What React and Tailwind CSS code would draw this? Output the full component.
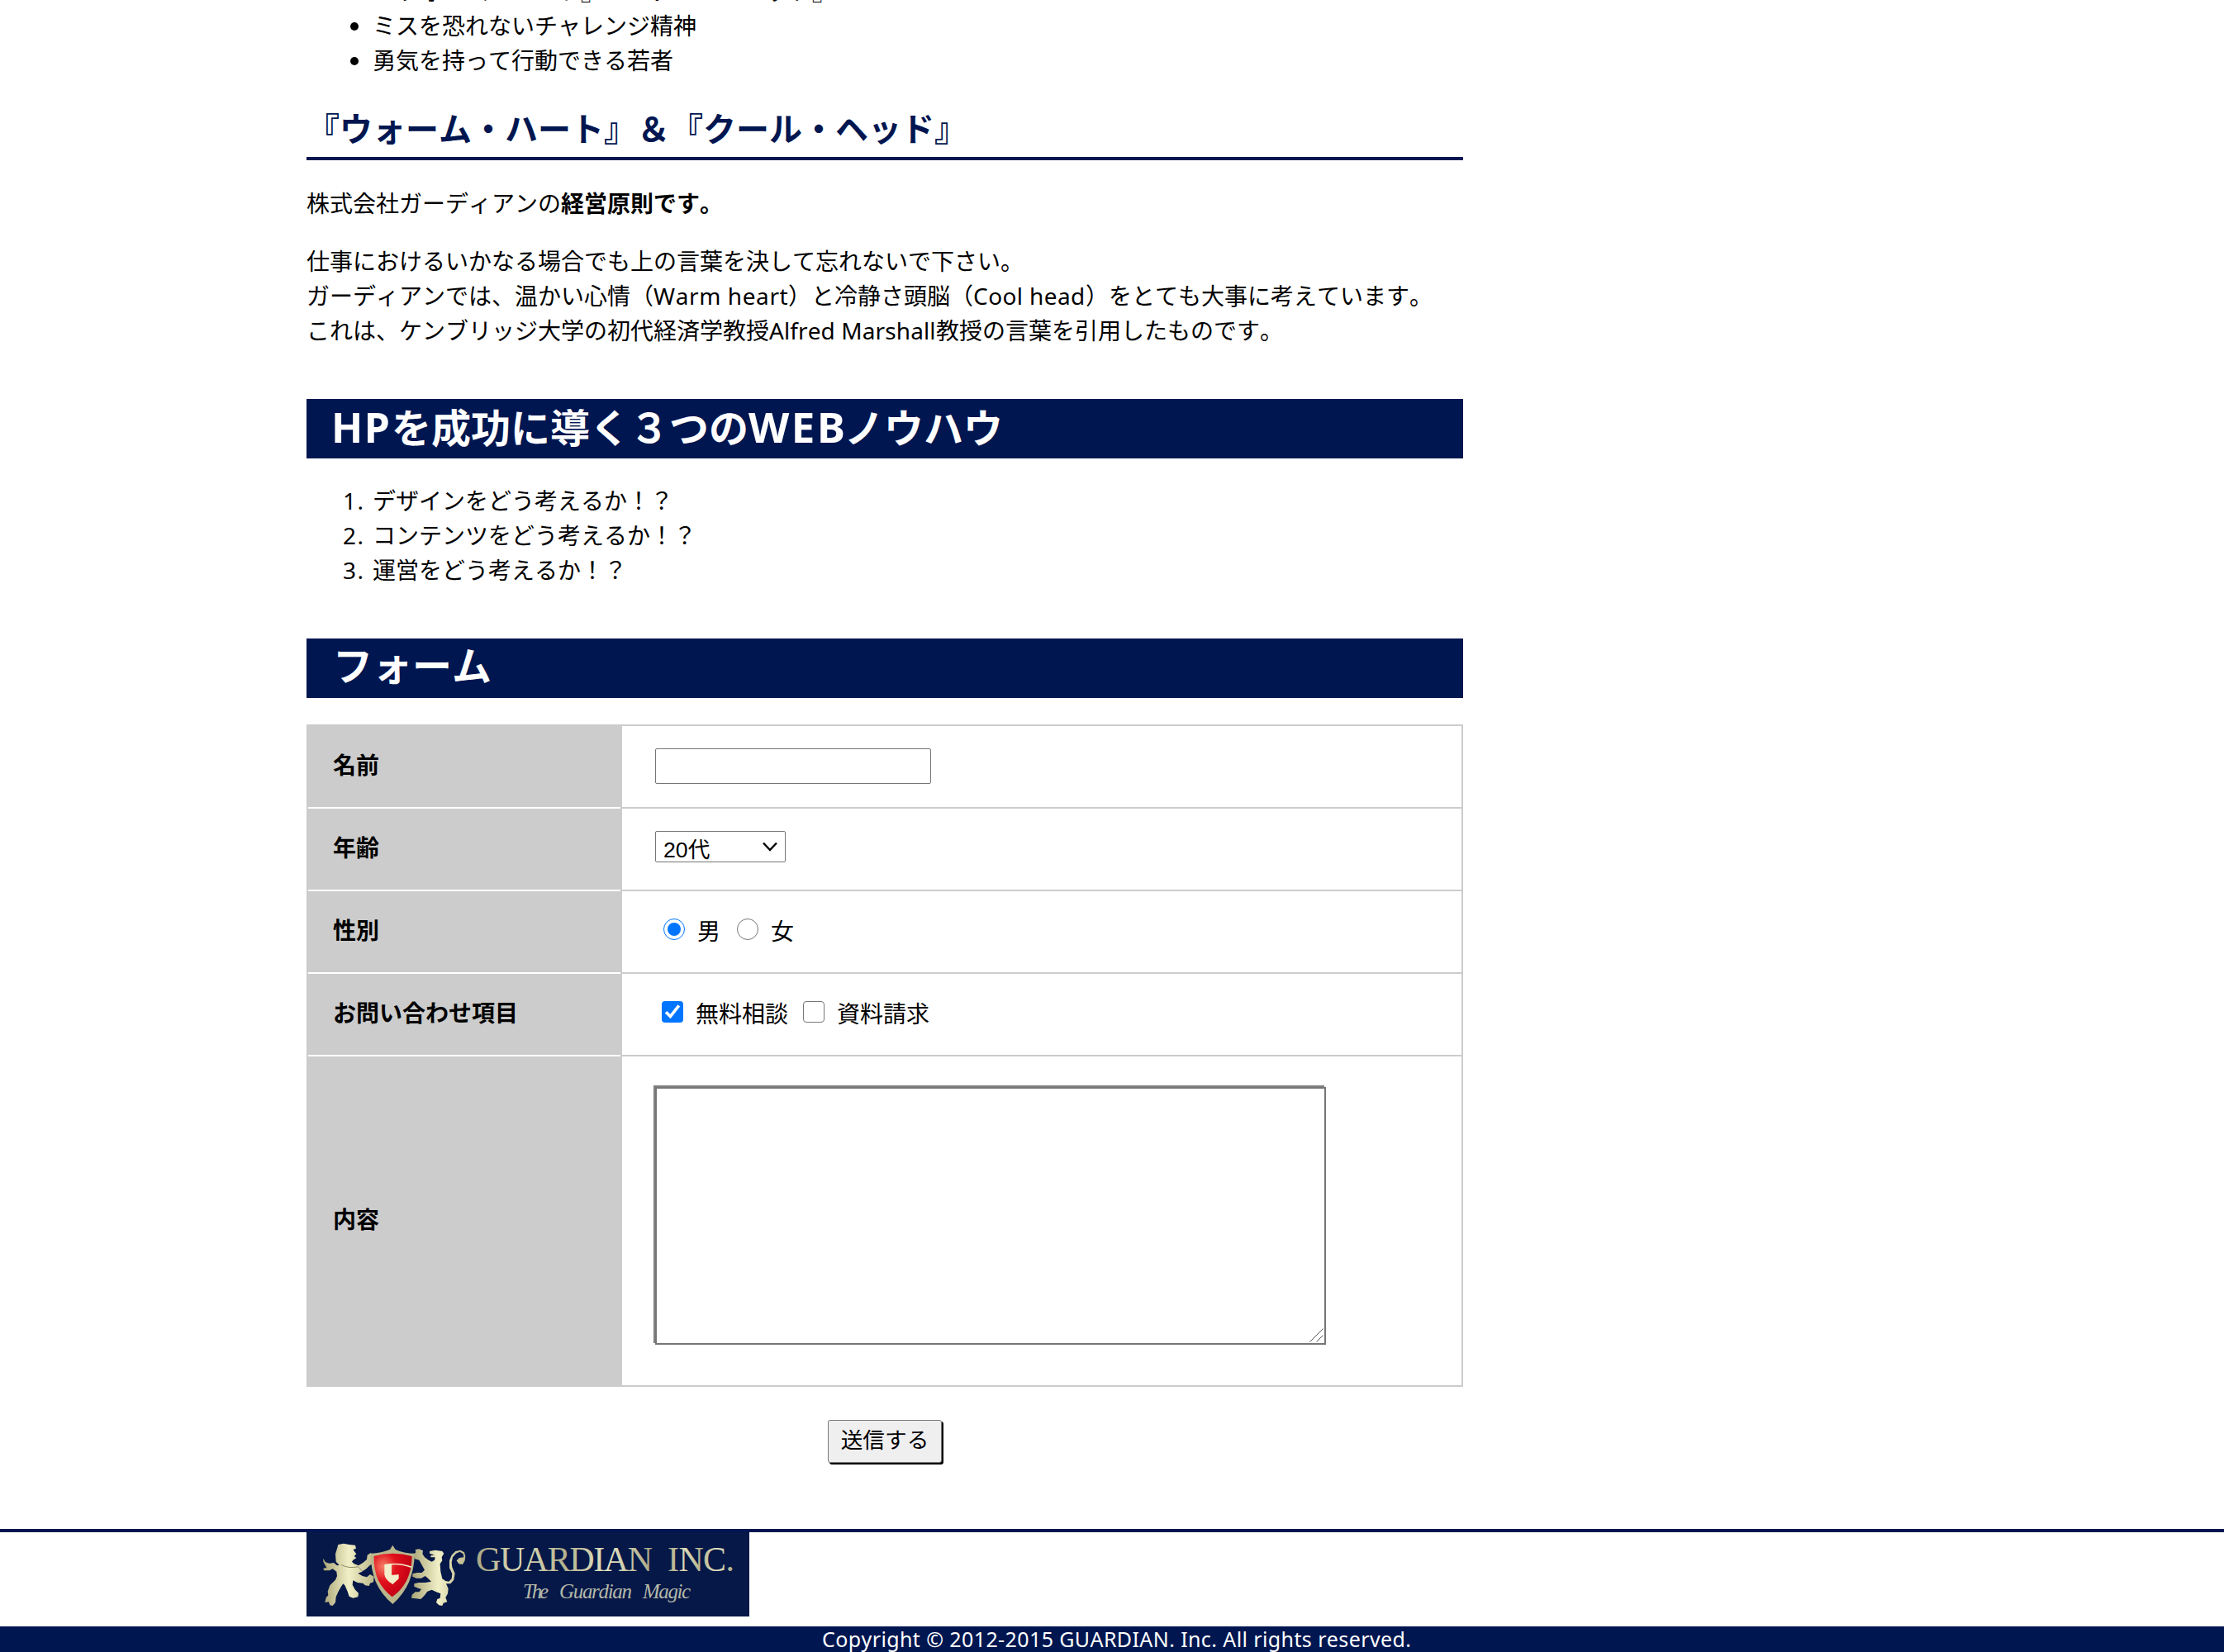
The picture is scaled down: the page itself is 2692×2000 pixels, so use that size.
import React from "react";

const Latin = ({ children, className }) => (
  <span className={"inline-block whitespace-pre " + className}>{children}</span>
);

const Banner = ({ children, className }) => (
  <h2 className={"h-[72px] bg-[#001650] pl-8 text-[48px] leading-[66px] font-bold text-white " + className}>
    {children}
  </h2>
);

const Step = ({ n, children }) => (
  <li className="flex">
    <span className="w-9 shrink-0 tracking-[1.5px]">{n}.</span>
    {children}
  </li>
);

const Row = ({ label, first, tall, children }) => (
  <div className={"flex " + (tall ? "h-[400px]" : first ? "h-[98px]" : "h-[100px]")}>
    <div
      className={
        "flex w-[378px] shrink-0 items-center bg-[#ccc] pb-1 pl-[30px] font-bold " +
        (first ? "" : "border-t-2 border-white")
      }
    >
      {label}
    </div>
    <div
      className={
        "flex flex-1 items-start border-l-2 border-[#ccc] pl-10 " + (first ? "" : "border-t-2")
      }
    >
      {children}
    </div>
  </div>
);

const Radio = ({ on, className }) => (
  <span
    className={
      "flex size-[26px] shrink-0 items-center justify-center rounded-full border " +
      (on ? "border-[#0075ff] " : "border-[#767676] ") +
      className
    }
  >
    {on && <span className="size-4 rounded-full bg-[#0075ff]" />}
  </span>
);

const Check = ({ on, className }) => (
  <span
    className={
      "flex size-[26px] shrink-0 items-center justify-center rounded-[4px] " +
      (on ? "bg-[#0075ff] " : "border border-[#767676] ") +
      className
    }
  >
    {on && (
      <svg width="26" height="26" viewBox="0 0 26 26" fill="none" stroke="#fff" strokeWidth="3.6">
        <path d="M5 13.2 L10.4 18.6 L20.8 5.4" />
      </svg>
    )}
  </span>
);

const Logo = () => (
  <svg width="536" height="102" viewBox="0 0 536 102" className="block bg-[#061848]">
    <defs>
      <linearGradient id="gold" x1="0" x2="1">
        <stop offset="0" stopColor="#a9a578" />
        <stop offset="0.5" stopColor="#f1efc6" />
        <stop offset="1" stopColor="#bdb98c" />
      </linearGradient>
      <linearGradient id="letters" x1="0" x2="1">
        <stop offset="0" stopColor="#a8a684" />
        <stop offset="0.25" stopColor="#dddbb8" />
        <stop offset="0.5" stopColor="#b5b38e" />
        <stop offset="0.75" stopColor="#e6e4c4" />
        <stop offset="1" stopColor="#a8a684" />
      </linearGradient>
      <radialGradient id="red" cx="0.25" cy="0.3" r="0.75">
        <stop offset="0" stopColor="#f58268" />
        <stop offset="0.45" stopColor="#e2101c" />
        <stop offset="1" stopColor="#c00014" />
      </radialGradient>
    </defs>
    <g transform="translate(9 1) scale(0.33333)">
      <path
        fill="url(#gold)"
        d="M88 42 L108 38 L128 42 L150 44 L153 56 L143 60 L148 68 L154 76 L146 84 L154 90 L142 98 L138 104 L146 112 L162 118 L178 108 L192 96 L194 80 L206 72 L216 82 L218 110 L204 116 L190 130 L172 142 L160 146 L176 156 L192 160 L204 150 L218 158 L216 178 L204 182 L200 192 L186 190 L178 182 L158 180 L142 172 L140 188 L150 206 L162 218 L160 232 L142 236 L128 230 L122 212 L112 190 L106 184 L98 196 L88 214 L80 232 L78 252 L68 264 L58 262 L54 250 L40 252 L44 234 L52 226 L50 212 L58 190 L78 170 L84 156 L82 140 L68 130 L56 136 L36 136 L34 128 L46 126 L34 104 L34 92 L42 106 L56 110 L72 108 L84 118 L92 116 L80 104 L78 76 L84 56 Z"
      />
      <path
        fill="url(#gold)"
        d="M362 78 L370 70 L368 60 L382 58 L396 64 L394 76 L402 88 L416 98 L428 104 L438 98 L440 88 L424 88 L424 82 L438 80 L420 74 L420 66 L440 62 L466 66 L472 74 L464 88 L466 100 L458 112 L460 140 L466 166 L478 174 L490 176 L500 166 L502 148 L492 126 L492 100 L500 80 L514 66 L532 62 L546 70 L550 84 L548 100 L540 114 L526 112 L518 100 L528 90 L544 88 L542 76 L530 68 L516 74 L504 88 L500 108 L502 124 L512 146 L508 170 L496 184 L480 184 L488 202 L486 220 L478 234 L484 250 L470 254 L466 264 L454 262 L444 252 L448 240 L458 236 L460 220 L444 214 L428 206 L412 212 L400 228 L388 240 L370 238 L354 236 L356 224 L368 214 L382 214 L390 204 L378 200 L364 194 L364 184 L380 180 L404 180 L426 176 L414 164 L404 156 L390 164 L372 164 L358 158 L358 148 L374 144 L392 144 L402 134 L392 116 L382 98 L366 94 Z"
      />
      <path
        fill="#b9b68c"
        d="M286 44 L296 60 Q326 74 366 74 Q364 130 346 176 Q326 222 286 258 Q244 222 224 176 Q206 130 206 74 Q246 72 276 60 Z"
      />
      <path
        fill="url(#red)"
        d="M218 84 Q286 64 356 84 Q356 132 336 174 Q316 210 284 232 Q252 208 234 172 Q216 132 218 84 Z"
      />
      <path fill="none" stroke="#f3eecb" strokeWidth="5" d="M258 116 Q310 106 354 124" />
      <path
        fill="#f3eecb"
        d="M256 114 L282 114 L282 152 L288 152 L308 150 L308 166 L286 186 Q258 170 256 150 Z"
      />
      <path fill="none" stroke="#8b8864" strokeWidth="3" d="M100 116 Q130 130 160 122 Q168 130 176 138" />
    </g>
    <g fill="url(#letters)" fontFamily="'Liberation Serif', serif">
      <text x="205" y="46.5" fontSize="42" textLength="214" lengthAdjust="spacing">
        GUARDIAN
      </text>
      <text x="437" y="46.5" fontSize="42" textLength="81" lengthAdjust="spacing">
        INC.
      </text>
    </g>
    <g fill="#b4b8a8" fontFamily="'Liberation Serif', serif" fontStyle="italic" fontSize="25">
      <text x="262" y="80" textLength="31">The</text>
      <text x="306" y="80" textLength="88">Guardian</text>
      <text x="407" y="80" textLength="58">Magic</text>
    </g>
  </svg>
);

export default function App() {
  return (
    <div className="h-[2000px] w-[2692px] overflow-hidden bg-white font-['Noto_Sans','Noto_Sans_CJK_JP',sans-serif] text-[28px] leading-[42px] text-black [font-kerning:none]">
      <main className="ml-[371px] flow-root h-[1851px] w-[1400px]">
        <ul className="-mt-8 list-disc pl-20">
          <li>『ウォーム・ハート』＆『クール・ヘッド』</li>
          <li>ミスを恐れないチャレンジ精神</li>
          <li>勇気を持って行動できる若者</li>
        </ul>

        <h3 className="mt-[31px] h-[69px] border-b-4 border-[#001650] text-[40px] leading-[62px] font-bold text-[#001650]">
          『ウォーム・ハート』＆『クール・ヘッド』
        </h3>

        <p className="mt-[31px]">
          株式会社ガーディアンの<strong>経営原則です。</strong>
        </p>
        <p className="mt-7 whitespace-nowrap">
          仕事におけるいかなる場合でも上の言葉を決して忘れないで下さい。
          <br />
          ガーディアンでは、温かい心情（
          <Latin className="w-[163px] tracking-[0.6px]">Warm heart</Latin>
          ）と冷静さ頭脳（<Latin className="w-[136px] tracking-[0.4px]">Cool head</Latin>
          ）をとても大事に考えています。
          <br />
          これは、ケンブリッジ大学の初代経済学教授
          <Latin className="w-[202px] tracking-[0.1px]">Alfred Marshall</Latin>
          教授の言葉を引用したものです。
        </p>

        <Banner className="mt-[62px]">
          <Latin className="-ml-[2px] w-[73px] text-[50px] tracking-[1.5px]">HP</Latin>を成功に導く３つの
          <Latin className="w-[116px] text-[51px] tracking-[2.5px]">WEB</Latin>ノウハウ
        </Banner>

        <ol className="mt-[30px] pl-11">
          <Step n="1">デザインをどう考えるか！？</Step>
          <Step n="2">コンテンツをどう考えるか！？</Step>
          <Step n="3">運営をどう考えるか！？</Step>
        </ol>

        <Banner className="mt-[62px]">フォーム</Banner>

        <form className="mt-8">
          <div className="border-2 border-[#ccc]">
            <Row label="名前" first>
              <input className="mt-[27px] h-[43px] w-[334px] rounded-[2px] border border-[#767676]" />
            </Row>
            <Row label="年齢">
              <div className="mt-[27px] flex h-[38px] w-[158px] items-center justify-between rounded-[2px] border border-[#767676] px-[9px] font-['Liberation_Sans','Noto_Sans_CJK_JP',sans-serif] text-[26.67px] leading-[36px]">
                <span className="pt-[7px]">20代</span>
                <svg width="18" height="12" viewBox="0 0 18 12" fill="none" stroke="#000" strokeWidth="2.4">
                  <path d="M1 1.5 L9 10 L17 1.5" />
                </svg>
              </div>
            </Row>
            <Row label="性別">
              <Radio on className="mt-[33px] ml-[10px]" />
              <span className="mt-[27px] ml-[15px]">男</span>
              <Radio className="mt-[33px] ml-5" />
              <span className="mt-[27px] ml-[15px]">女</span>
            </Row>
            <Row label="お問い合わせ項目">
              <Check on className="mt-[33px] ml-[8px]" />
              <span className="mt-[27px] ml-[15px]">無料相談</span>
              <Check className="mt-[33px] ml-[18px]" />
              <span className="mt-[27px] ml-[15px]">資料請求</span>
            </Row>
            <Row label="内容" tall>
              <div className="mt-[37px] flex h-[312px] w-[812px] items-end justify-end border-2 border-[#767676] p-px shadow-[-2px_-2px_0_#808080]">
                <svg width="17" height="17" viewBox="0 0 17 17" stroke="#555" strokeWidth="1">
                  <path d="M0.5 16.5 L16.5 0.5 M8.5 16.5 L16.5 8.5" />
                </svg>
              </div>
            </Row>
          </div>
          <button
            type="button"
            className="mt-10 ml-[631px] block h-[52px] w-[138px] rounded-[3px] border border-[#767676] bg-[#efefef] pb-1 text-[26.67px] leading-[44px] shadow-[2px_2px_0_#000]"
          >
            送信する
          </button>
        </form>
      </main>

      <footer className="border-t-4 border-[#001650]">
        <div className="ml-[371px] h-[114px]">
          <Logo />
        </div>
        <div className="h-[31px] bg-[#001650] pl-[995px] text-[25px] leading-[31px] whitespace-nowrap text-white">
          <span className="tracking-[0.4px]">Copyright © 2012-2015 GUARDIAN. Inc. All rights reserved.</span>
        </div>
      </footer>
    </div>
  );
}
